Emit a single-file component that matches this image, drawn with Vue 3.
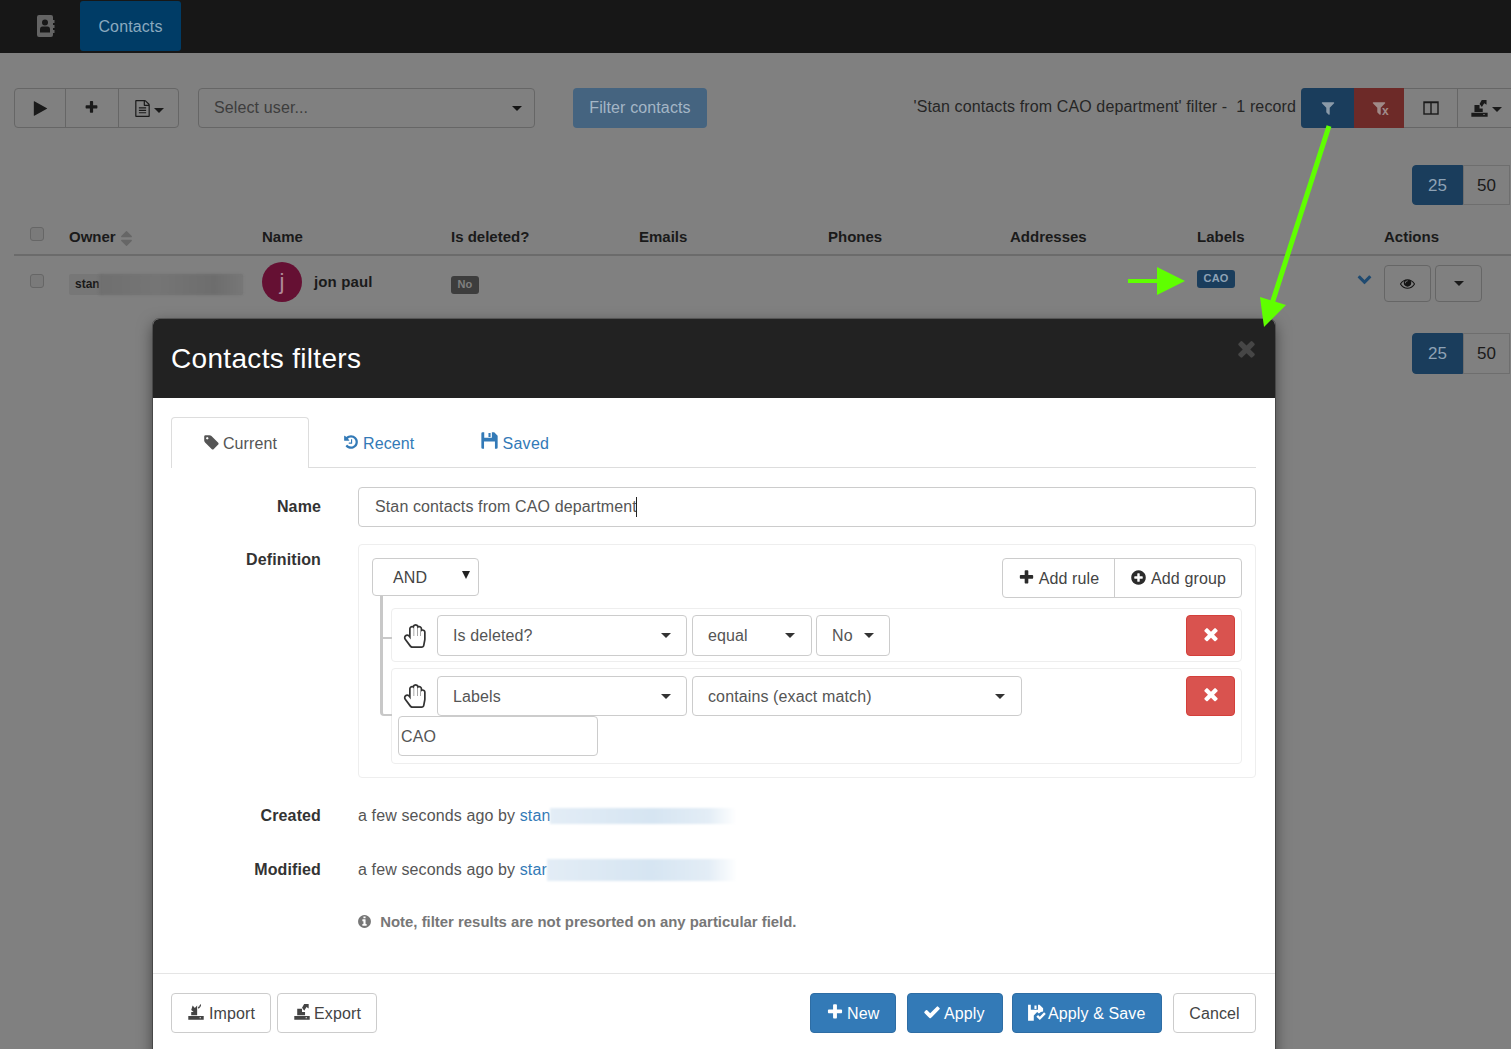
<script setup>
import { h } from 'vue'

const paths = {
  plus: 'M1600 736v192q0 40-28 68t-68 28h-416v416q0 40-28 68t-68 28h-192q-40 0-68-28t-28-68v-416h-416q-40 0-68-28t-28-68v-192q0-40 28-68t68-28h416v-416q0-40 28-68t68-28h192q40 0 68 28t28 68v416h416q40 0 68 28t28 68z',
  times: 'M1490 1322q0 40-28 68l-136 136q-28 28-68 28t-68-28l-294-294-294 294q-28 28-68 28t-68-28l-136-136q-28-28-28-68t28-68l294-294-294-294q-28-28-28-68t28-68l136-136q28-28 68-28t68 28l294 294 294-294q28-28 68-28t68 28l136 136q28 28 28 68t-28 68l-294 294 294 294q28 28 28 68z',
  check: 'M1671 566q0 40-28 68l-724 724-136 136q-28 28-68 28t-68-28l-136-136-362-362q-28-28-28-68t28-68l136-136q28-28 68-28t68 28l294 295 656-657q28-28 68-28t68 28l136 136q28 28 28 68z',
  filter: 'M1595 295q17 41-14 70l-493 493v742q0 42-39 59-13 5-25 5-27 0-45-19l-256-256q-19-19-19-45v-486l-493-493q-31-29-14-70 17-39 59-39h1280q42 0 59 39z',
  tag: 'M576 448q0-53-37.500-90.500t-90.500-37.500-90.500 37.500-37.500 90.500 37.500 90.500 90.500 37.500 90.500-37.500 37.500-90.500zm1067 576q0 53-37 90l-491 492q-39 37-91 37-53 0-90-37l-715-716q-38-37-64.500-101t-26.500-117v-416q0-52 38-90t90-38h416q53 0 117 26.500t102 64.500l715 714q37 39 37 91z',
  history: 'M1664 896q0 156-61 298t-164 245-245 164-298 61q-172 0-327-72.500t-264-204.500q-7-10-6.500-22.500t8.500-20.500l137-138q10-9 25-9 16 2 23 12 73 95 179 147t225 52q104 0 198.500-40.500t163.500-109.500 109.500-163.500 40.500-198.500-40.500-198.500-109.500-163.500-163.500-109.500-198.500-40.500q-98 0-188 35.500t-160 101.500l137 138q31 30 14 69-17 40-59 40h-448q-26 0-45-19t-19-45v-448q0-42 40-59 39-17 69 14l130 129q107-101 244.500-156.500t284.500-55.500q156 0 298 61t245 164 164 245 61 298zm-640-288v448q0 14-9 23t-23 9h-320q-14 0-23-9t-9-23v-64q0-14 9-23t23-9h224v-352q0-14 9-23t23-9h64q14 0 23 9t9 23z',
  info: 'M1152 1376v-160q0-14-9-23t-23-9h-96v-512q0-14-9-23t-23-9h-320q-14 0-23 9t-9 23v160q0 14 9 23t23 9h96v320h-96q-14 0-23 9t-9 23v160q0 14 9 23t23 9h448q14 0 23-9t9-23zm-128-896v-160q0-14-9-23t-23-9h-192q-14 0-23 9t-9 23v160q0 14 9 23t23 9h192q14 0 23-9t9-23zm640 416q0 209-103 385.500t-279.500 279.500-385.500 103-385.500-103-279.500-279.500-103-385.500 103-385.500 279.500-279.500 385.500-103 385.500 103 279.500 279.500 103 385.500z',
  plusCircle: 'M1344 960v-128q0-26-19-45t-45-19h-256v-256q0-26-19-45t-45-19h-128q-26 0-45 19t-19 45v256h-256q-26 0-45 19t-19 45v128q0 26 19 45t45 19h256v256q0 26 19 45t45 19h128q26 0 45-19t19-45v-256h256q26 0 45-19t19-45zm320-64q0 209-103 385.500t-279.500 279.500-385.500 103-385.500-103-279.500-279.500-103-385.500 103-385.500 279.500-279.500 385.500-103 385.500 103 279.500 279.500 103 385.500z',
  eye: 'M1664 960q-152-236-381-353 61 104 61 225 0 185-131.500 316.500t-316.500 131.500-316.500-131.500-131.500-316.500q0-121 61-225-229 117-381 353 133 205 333.500 326.500t434.500 121.500 434.500-121.500 333.500-326.500zm-720-384q0-20-14-34t-34-14q-125 0-214.500 89.500t-89.500 214.500q0 20 14 34t34 14 34-14 14-34q0-86 61-147t147-61q20 0 34-14t14-34zm848 384q0 34-20 69-140 230-376.500 368.500t-499.500 138.500-499.500-139-376.500-368q-20-35-20-69t20-69q140-229 376.500-368t499.500-139 499.500 139 376.500 368q20 35 20 69z',
  play: 'M1576 927l-1328 738q-23 13-39.500 3t-16.500-36v-1472q0-26 16.500-36t39.500 3l1328 738q23 13 23 31t-23 31z',
  chevron: 'M1683 808l-742 741q-19 19-45 19t-45-19l-742-741q-19-19-19-45.500t19-45.500l166-165q19-19 45-19t45 19l531 531 531-531q19-19 45-19t45 19l166 165q19 19 19 45.500t-19 45.500z',
  sort: 'M1408 1088q0 26-19 45l-448 448q-19 19-45 19t-45-19l-448-448q-19-19-19-45t19-45 45-19h896q26 0 45 19t19 45zm0-384q0 26-19 45t-45 19h-896q-26 0-45-19t-19-45 19-45l448-448q19-19 45-19t45 19l448 448q19 19 19 45z',
  file: 'M1596 380q28 28 48 76t20 88v1152q0 40-28 68t-68 28h-1344q-40 0-68-28t-28-68v-1600q0-40 28-68t68-28h896q40 0 88 20t76 48zm-444-244v376h376q-10-29-22-41l-313-313q-12-12-41-22zm384 1528v-1024h-416q-40 0-68-28t-28-68v-416h-768v1536h1280zm-1024-864q0-14 9-23t23-9h704q14 0 23 9t9 23v64q0 14-9 23t-23 9h-704q-14 0-23-9t-9-23v-64zm736 224q14 0 23 9t9 23v64q0 14-9 23t-23 9h-704q-14 0-23-9t-9-23v-64q0-14 9-23t23-9h704zm0 256q14 0 23 9t9 23v64q0 14-9 23t-23 9h-704q-14 0-23-9t-9-23v-64q0-14 9-23t23-9h704z',
  hand: 'M880 128q-46 0-79 33t-33 79v656h-32v-528q0-46-33-79t-79-33-79 33-33 79v528 256l-154-205q-38-51-102-51-53 0-90.500 37.500t-37.500 90.500q0 43 26 77l384 512q38 51 102 51h688q34 0 61-22t34-56l76-405q5-32 5-59v-498q0-46-33-79t-79-33-79 33-33 79v272h-32v-528q0-46-33-79t-79-33-79 33-33 79v528h-32v-656q0-46-33-79t-79-33zm0-128q68 0 125.500 35.500t88.500 96.500q19-4 42-4 99 0 169.500 70.500t70.500 169.500v17q105-6 180.500 64t75.500 175v498q0 40-8 83l-76 404q-14 79-76.500 131t-143.500 52h-688q-60 0-114.500-27.500t-90.500-74.500l-384-512q-51-68-51-154 0-106 75-181t181-75q78 0 128 34v-434q0-99 70.500-169.500t169.500-70.500q23 0 42 4 31-61 88.500-96.500t125.500-35.500z',
  save: 'M160 128H1340L1664 452V1552Q1664 1664 1552 1664H1410V1000H380V1664H240Q128 1664 128 1552V240Q128 128 240 128ZM400 128V640H1120V128ZM800 200H1000V560H800Z',
  applySave: 'M100 160H1180L1520 500V800Q1300 800 1120 1000L960 850L640 1180V1664H100ZM360 160V640H1040V160ZM700 230H900V570H700ZM1040 1130L1210 1300L1610 880L1770 1040L1210 1600L880 1290Z',
  export: 'M128 1300H1664V1664H128ZM1260 1420H1380V1520H1260ZM420 560H900V900H1200V1220H420ZM900 480L1110 100L1560 100L1560 550L1340 400L1120 760Z',
  import: 'M128 1300H1664V1664H128ZM1260 1420H1380V1520H1260ZM560 260L780 490L1010 260V1220H420V900H660L420 690ZM1150 320L1390 320V100ZM1070 480L1270 240L1370 340L1170 560Z',
  book: 'M3 0H15Q17 0 17 2V5H18.500V8H17V10H18.500V13H17V15H18.500V18H17V20Q17 22 15 22H3Q1 22 1 20V2Q1 0 3 0ZM9 4.500A3 3 0 1 0 9 10.500A3 3 0 1 0 9 4.500ZM4 17.500H14V14.500Q14 11.500 11.500 11.500H6.500Q4 11.500 4 14.500Z'
}

const Ico = (props) =>
  h(
    'svg',
    {
      class: 'ico',
      width: props.size || 16,
      height: props.size || 16,
      viewBox: props.box || '0 0 1792 1792',
      fill: props.color || 'currentColor',
      'aria-hidden': 'true'
    },
    [h('path', { d: paths[props.name], 'fill-rule': 'evenodd' })]
  )
Ico.props = ['name', 'size', 'box', 'color']

const headers = ['Owner', 'Name', 'Is deleted?', 'Emails', 'Phones', 'Addresses', 'Labels', 'Actions']
</script>

<template>
  <div class="screen">
    <nav class="nav">
      <span class="brand"><Ico name="book" :size="22" box="0 0 22 22" color="#646464" /></span>
      <span class="nav-tab">Contacts</span>
    </nav>

    <section class="page">
      <div class="toolbar">
        <div class="group">
          <span class="gbtn play"><Ico name="play" :size="17" /></span>
          <span class="gbtn add"><Ico name="plus" :size="15" /></span>
          <span class="gbtn doc"><Ico name="file" :size="17" /><i class="caret"></i></span>
        </div>
        <div class="user-select"><span>Select user...</span><i class="caret"></i></div>
        <span class="filter-btn">Filter contacts</span>
        <span class="filter-info">'Stan contacts from CAO department' filter - &nbsp;1 record</span>
        <div class="group right">
          <span class="gbtn f-blue"><Ico name="filter" :size="16" /></span>
          <span class="gbtn f-red"><Ico name="filter" :size="16" /><b class="x">x</b></span>
          <span class="gbtn f-col"><svg class="ico" width="16" height="16" viewBox="0 0 16 16" fill="none" stroke="#1a1a1a" stroke-width="1.400"><rect x="1" y="2" width="14" height="12" /><path d="M1 2.600h14M8 2v12" /></svg></span>
          <span class="gbtn f-exp"><Ico name="export" :size="19" /><i class="caret"></i></span>
        </div>
      </div>

      <div class="pager first"><span class="on">25</span><span>50</span></div>

      <div class="thead">
        <span class="check head-check"></span>
        <span v-for="label in headers" :key="label" class="th">
          {{ label }}<Ico v-if="label === 'Owner'" name="sort" :size="19" color="#666" />
        </span>
      </div>

      <div class="trow">
        <span class="check row-check"></span>
        <div class="owner"><span>stan</span><i class="smudge"></i></div>
        <div class="person"><span class="avatar">j</span><b>jon paul</b></div>
        <div><span class="no">No</span></div>
        <div></div>
        <div></div>
        <div></div>
        <div class="labels">
          <span class="cao">CAO</span>
          <Ico class="chev" name="chevron" :size="15" color="#1f4a70" />
        </div>
        <div class="actions">
          <span class="act"><Ico name="eye" :size="15" color="#141414" /></span>
          <span class="act"><i class="caret"></i></span>
        </div>
      </div>

      <div class="pager second"><span class="on">25</span><span>50</span></div>
    </section>

    <div class="modal">
      <header class="m-head">
        <h2>Contacts filters</h2>
        <Ico name="times" :size="25" color="#464646" />
      </header>

      <div class="m-body">
        <div class="tabs">
          <span class="tab active"><Ico name="tag" :size="17" /> Current</span>
          <span class="tab"><Ico name="history" :size="16" /> Recent</span>
          <span class="tab saved"><Ico name="save" :size="19" /> Saved</span>
        </div>

        <div class="form-row name-row">
          <label>Name</label>
          <div class="input">Stan contacts from CAO department<i class="cursor"></i></div>
        </div>

        <div class="form-row def-row">
          <label>Definition</label>
          <div class="builder">
            <div class="b-head">
              <div class="and"><span>AND</span><i class="down"></i></div>
              <div class="add-group">
                <span><Ico name="plus" :size="17" /> Add rule</span>
                <span><Ico name="plusCircle" :size="17" /> Add group</span>
              </div>
            </div>

            <div class="rule one">
              <div class="rule-line">
                <Ico class="hand" name="hand" :size="24" box="0 0 1664 1792" color="#333" />
                <div class="sel w250"><span>Is deleted?</span><i class="caret"></i></div>
                <div class="sel w120"><span>equal</span><i class="caret"></i></div>
                <div class="sel w74"><span>No</span><i class="caret"></i></div>
                <span class="del"><Ico name="times" :size="20" color="#fff" /></span>
              </div>
            </div>

            <div class="rule two">
              <div class="rule-line">
                <Ico class="hand" name="hand" :size="24" box="0 0 1664 1792" color="#333" />
                <div class="sel w250 h40"><span>Labels</span><i class="caret"></i></div>
                <div class="sel w330 h40"><span>contains (exact match)</span><i class="caret"></i></div>
                <span class="del h40"><Ico name="times" :size="20" color="#fff" /></span>
              </div>
              <div class="value">CAO</div>
            </div>
          </div>
        </div>

        <div class="form-row meta created">
          <label>Created</label>
          <div>a few seconds ago by <a>stan</a><i class="blur"></i></div>
        </div>
        <div class="form-row meta modified">
          <label>Modified</label>
          <div>a few seconds ago by <a>star</a><i class="blur tall"></i></div>
        </div>
        <div class="form-row note">
          <span></span>
          <div class="note-text"><Ico name="info" :size="15" /> &nbsp;Note, filter results are not presorted on any particular field.</div>
        </div>
      </div>

      <footer class="m-foot">
        <span class="btn import"><Ico name="import" :size="18" /> Import</span>
        <span class="btn export"><Ico name="export" :size="18" /> Export</span>
        <span class="btn primary new"><Ico name="plus" :size="18" /> New</span>
        <span class="btn primary apply"><Ico name="check" :size="18" /> Apply</span>
        <span class="btn primary applysave"><Ico name="applySave" :size="19" /> Apply &amp; Save</span>
        <span class="btn cancel">Cancel</span>
      </footer>
    </div>

    <svg class="arrows" width="1511" height="340" viewBox="0 0 1511 340">
      <path d="M1329 126L1270 310" stroke="#5fff00" stroke-width="5" fill="none" />
      <path d="M1260 297L1286 305L1264 327Z" fill="#5fff00" />
      <path d="M1128 281H1160" stroke="#5fff00" stroke-width="4" fill="none" />
      <path d="M1157 267L1185 281L1157 295Z" fill="#5fff00" />
    </svg>
  </div>
</template>

<style>
html, body { margin: 0; background: #808080; }
</style>

<style scoped>
.screen {
  position: relative;
  width: 1511px;
  height: 1049px;
  overflow: hidden;
  background: #808080;
  color: #1a1a1a;
  font: 16px/22px "Liberation Sans", Arial, sans-serif;
  letter-spacing: .12px;
}
.ico { display: inline-block; vertical-align: -2px; flex: none; }
.caret {
  display: inline-block;
  width: 0;
  height: 0;
  border-top: 5px solid currentColor;
  border-left: 5px solid transparent;
  border-right: 5px solid transparent;
}

.nav { height: 53px; background: #171717; display: flex; }
.brand { width: 80px; display: flex; align-items: center; padding: 0 0 2px 36px; box-sizing: border-box; }
.nav-tab {
  width: 101px; height: 50px; margin-top: 1px; padding-top: 1px; box-sizing: border-box; background: #003c66; color: #8aa9bf;
  border-radius: 3px; display: flex; align-items: center; justify-content: center;
}

.page { width: 1540px; padding-left: 14px; box-sizing: border-box; }
.toolbar { display: flex; align-items: center; margin-top: 35px; height: 40px; }
.group { display: flex; height: 40px; border: 1px solid #666; border-radius: 4px; box-sizing: border-box; }
.gbtn { display: flex; align-items: center; justify-content: center; gap: 3px; border-right: 1px solid #666; box-sizing: border-box; }
.gbtn:last-child { border-right: 0; }
.play { width: 51px; }
.add { width: 53px; padding: 0 2px 2px 0; }
.doc { width: 59px; padding-top: 1px; }
.doc .caret { margin-top: 3px; }
.user-select {
  width: 337px; height: 40px; margin-left: 19px; padding: 0 12px 0 15px; box-sizing: border-box;
  border: 1px solid #666; border-radius: 4px; display: flex; align-items: center; justify-content: space-between; color: #3d3d3d;
}
.user-select .caret { color: #141414; }
.filter-btn {
  width: 134px; height: 40px; margin-left: 38px; background: #456480; color: #a4b6c6;
  border-radius: 4px; display: flex; align-items: center; justify-content: center;
}
.filter-info { width: 390px; margin-left: 199px; margin-right: 5px; white-space: nowrap; padding-bottom: 3px; text-align: right; box-sizing: border-box; color: #262626; }
.group.right { flex: none; width: 217px; border: 0; border-top: 1px solid #666; border-bottom: 1px solid #666; border-radius: 4px; }
.f-blue { width: 53px; height: 40px; margin-top: -1px; background: #1a3d5c; color: #8a9aa8; border-radius: 4px 0 0 4px; border: 0; }
.f-red { width: 50px; height: 40px; margin-top: -1px; background: #6d2a28; color: #a08a88; border: 0; position: relative; padding-right: 1px; }
.x { position: absolute; left: 28px; top: 12px; font-size: 12px; color: #a08a88; }
.f-col { width: 54px; height: 38px; }
.f-exp { width: 60px; height: 38px; padding-left: 12px; justify-content: flex-start; gap: 3px; }
.f-exp .caret { margin-top: 3px; }

.pager { display: flex; height: 40px; }
.pager span {
  width: 51px; padding-top: 1px; box-sizing: border-box; display: flex; align-items: center; justify-content: center;
  border: 1px solid #6e6e6e; color: #1a1a1a; font-size: 17px; letter-spacing: 0;
}
.pager span:last-child { width: 47px; }
.pager .on { background: #1a3d5c; border-color: #1a3d5c; color: #8ea2b5; border-radius: 4px 0 0 4px; }
.pager.first { margin: 37px 0 0 1398px; }
.pager.second { margin: 23px 0 0 1398px; height: 41px; }

.thead, .trow {
  display: grid;
  grid-template-columns: 55px 193px 189px 188px 189px 182px 187px 187px 150px;
}
.thead { margin-top: 15px; height: 36px; box-sizing: border-box; border-bottom: 2px solid #6b6b6b; align-items: start; }
.th { font-size: 15px; font-weight: 700; line-height: 34px; letter-spacing: 0; white-space: nowrap; }
.th .ico { margin: -5px 0 -5px 1px; vertical-align: -1px; }
.check {
  width: 14px; height: 14px; box-sizing: border-box; margin-left: 16px; border: 1px solid #666;
  border-radius: 3px; background: #7a7a7a;
}
.head-check { margin-top: 7px; }
.trow { height: 54px; }
.row-check { margin-top: 18px; }
.owner { display: flex; width: 174px; height: 21px; margin-top: 18px; font-size: 12px; font-weight: 700; line-height: 21px; background: #777; border-radius: 2px; letter-spacing: 0; }
.owner span { padding-left: 6px; width: 24px; overflow: hidden; }
.smudge { flex: 1; background: linear-gradient(90deg, #6f6f6f, #757575 40%, #6d6d6d 80%, #777); filter: blur(1.500px); }
.person { display: flex; align-items: center; gap: 12px; height: 40px; margin-top: 6px; font-size: 15px; }
.avatar {
  width: 40px; height: 40px; border-radius: 50%; background: #651033; color: #b08a9a;
  font-size: 22px; display: flex; align-items: center; justify-content: center;
}
.no {
  display: inline-block; width: 28px; height: 18px; margin-top: 20px; border-radius: 3px; background: #3d3d3d;
  color: #808080; font: 700 11px/17px "Liberation Sans", Arial, sans-serif; text-align: center;
}
.labels { display: flex; justify-content: space-between; align-items: flex-start; padding-right: 12px; }
.cao {
  width: 38px; height: 18px; margin-top: 14px; border-radius: 3px; background: #1a3d5c; color: #8ea2b5;
  font: 700 11px/17px "Liberation Sans", Arial, sans-serif; text-align: center;
}
.chev { margin-top: 15px; }
.actions { display: flex; gap: 4px; margin-top: 9px; }
.act {
  width: 47px; height: 37px; box-sizing: border-box; border: 1px solid #666; border-radius: 4px;
  display: flex; align-items: center; justify-content: center;
}

.modal {
  position: absolute;
  left: 153px;
  top: 319px;
  width: 1122px;
  height: 760px;
  background: #fff;
  color: #333;
  border-radius: 6px;
  box-shadow: 0 5px 15px rgba(0, 0, 0, .5);
  outline: 1px solid rgba(0, 0, 0, .25);
}
.m-head {
  height: 79px; background: #222; color: #fff; border-radius: 6px 6px 0 0;
  display: flex; align-items: center; justify-content: space-between; padding: 0 16px 0 18px; box-sizing: border-box;
}
.m-head h2 { margin: 0; font: 400 28px/36px "Liberation Sans", Arial, sans-serif; padding-top: 1px; letter-spacing: .32px; }
.m-head .ico { margin-top: -20px; }
.m-body { padding: 19px 19px 0 18px; height: 576px; box-sizing: border-box; border-bottom: 1px solid #e5e5e5; }

.tabs { display: flex; height: 51px; border-bottom: 1px solid #ddd; box-sizing: border-box; }
.tab { padding: 2px 33px 0 34px; color: #337ab7; display: flex; align-items: center; gap: 4px; height: 51px; box-sizing: border-box; }
.tab.active {
  width: 138px; padding: 2px 0 0; justify-content: center; gap: 3px; color: #555; background: #fff;
  border: 1px solid #ddd; border-bottom: 0; border-radius: 4px 4px 0 0;
}
.tab .ico { margin-top: -3px; }
.tab.saved { letter-spacing: .3px; }
.tab.saved .ico { margin: -7px -1px 0 -1px; }

.form-row { display: grid; grid-template-columns: 150px 898px; column-gap: 37px; }
.form-row label { font-weight: 700; text-align: right; color: #333; }
.name-row { margin-top: 19px; }
.name-row label { line-height: 40px; }
.input {
  height: 40px; padding: 0 16px; box-sizing: border-box; border: 1px solid #ccc; border-radius: 4px;
  color: #555; display: flex; align-items: center;
}
.cursor { width: 1px; height: 20px; background: #222; margin-left: -1px; }
.def-row { margin-top: 17px; }
.def-row label { padding-top: 5px; }
.builder { height: 234px; padding: 13px; box-sizing: border-box; border: 1px solid #eee; border-radius: 4px; }
.b-head { display: flex; justify-content: space-between; align-items: flex-start; height: 40px; }
.and {
  width: 107px; height: 38px; box-sizing: border-box; border: 1px solid #ccc; border-radius: 4px; color: #444;
  padding: 1px 8px 0 20px; display: flex; align-items: center; justify-content: space-between;
}
.down { width: 0; height: 0; border-top: 8px solid #222; border-left: 4px solid transparent; border-right: 4px solid transparent; margin-top: -5px; }
.add-group { display: flex; height: 40px; border: 1px solid #ccc; border-radius: 4px; box-sizing: border-box; color: #444; }
.add-group span { display: flex; align-items: center; justify-content: center; gap: 4px; padding-top: 1px; box-sizing: border-box; }
.add-group span:first-child { width: 112px; border-right: 1px solid #ccc; }
.add-group span:last-child { width: 126px; }
.add-group .ico { color: #2b2b2b; margin-top: -2px; }
.rule {
  position: relative; margin-left: 19px; border: 1px solid #eee; border-radius: 4px; box-sizing: border-box;
}
.rule::before {
  content: ""; position: absolute; left: -12px; border-left: 3px solid #c8c8c8; border-bottom: 2px solid #c8c8c8; width: 9px;
}
.rule.one { margin-top: 10px; height: 54px; padding: 6px 6px 0 0; }
.rule.one::before { top: -13px; height: 41px; }
.rule.two { margin-top: 6px; height: 96px; padding: 7px 6px 0 0; }
.rule.two::before { top: -33px; height: 78px; border-radius: 0 0 0 4px; }
.rule-line { display: flex; align-items: center; }
.hand { margin: 0 10px 0 11px; }
.sel {
  height: 41px; box-sizing: border-box; border: 1px solid #ccc; border-radius: 4px; color: #555; padding: 0 15px 0 15px;
  display: flex; align-items: center; justify-content: space-between;
}
.sel .caret { color: #333; }
.h40 { height: 40px !important; padding-top: 1px; }
.w250 { width: 250px; margin-right: 5px; }
.w120 { width: 120px; margin-right: 4px; padding-right: 16px; }
.w74 { width: 74px; }
.w330 { width: 330px; padding-right: 16px; }
.del {
  width: 49px; height: 41px; margin-left: auto; padding: 0 0 4px 0; background: #d9534f; border: 1px solid #d43f3a; border-radius: 4px;
  box-sizing: border-box; display: flex; align-items: center; justify-content: center;
}
.value {
  width: 200px; height: 40px; margin-left: 6px; padding: 1px 0 0 2px; box-sizing: border-box; border: 1px solid #ccc;
  border-radius: 4px; color: #555; display: flex; align-items: center;
}
.meta { color: #555; line-height: 24px; }
.meta a { color: #337ab7; }
.created { margin-top: 26px; }
.modified { margin-top: 30px; }
.blur { display: inline-block; width: 186px; height: 16px; vertical-align: -3px; background: linear-gradient(90deg, #e3edf6, #d6e5f2 55%, #e3edf6 85%, #fff); filter: blur(1px); }
.blur.tall { width: 190px; height: 22px; vertical-align: -6px; }
.note { margin-top: 29px; font-size: 14.900px; font-weight: 700; color: #777; letter-spacing: 0; white-space: nowrap; }
.note-text { margin-left: -1px; }
.note .ico { vertical-align: -2px; }

.m-foot { display: flex; padding: 19px 19px 19px 18px; align-items: center; }
.btn {
  height: 40px; box-sizing: border-box; padding: 1px 15px 0; border: 1px solid #ccc; border-radius: 4px; color: #444;
  display: flex; align-items: center; gap: 4px; white-space: nowrap;
}
.btn .ico { margin-top: -3px; }
.btn.import { width: 100px; }
.btn.export { width: 100px; margin-left: 6px; gap: 3px; }
.primary { background: #337ab7; border-color: #2e6da4; color: #fff; }
.btn.new { margin-left: auto; width: 86px; padding-right: 0; gap: 3px; }
.btn.apply { margin-left: 11px; width: 96px; gap: 3px; }
.btn.applysave { margin-left: 9px; width: 150px; gap: 2px; padding: 1px 0 0 14px; }
.btn.cancel { margin-left: 11px; width: 83px; justify-content: center; }

.arrows { position: absolute; left: 0; top: 0; pointer-events: none; }
</style>
